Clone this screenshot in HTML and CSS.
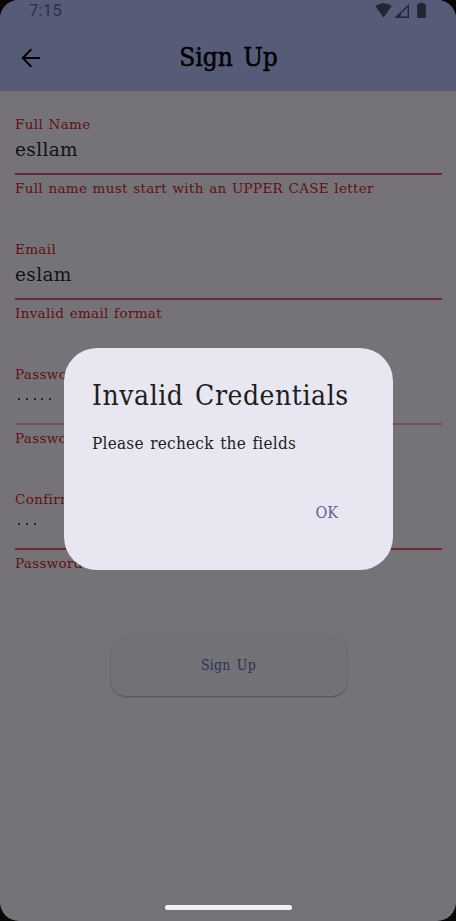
FILE: index.html
```html
<!DOCTYPE html>
<html lang="en">
<head>
<meta charset="utf-8">
<title>Sign Up</title>
<link rel="stylesheet" href="styles.css">
</head>
<body>
<div class="screen">
  <header class="header">
    <div class="status">
      <span class="time">7:15</span>
      <svg class="status-icons" width="54" height="18" viewBox="0 0 54 18">
        <path d="M1.200 5.900Q9.500 .4 17.800 5.900L9.500 17.400Z"/>
        <path d="M35 4v13.900H20.600Zm-1.400 3.300-7.200 7v2.300H33.600Z" fill-rule="evenodd"/>
        <path d="M20.600 17.900l6-5.900v5.900Z"/>
        <path d="M45.500 3.800v-1h4v1h1.300q1 0 1 1v12q0 1.200-1.200 1.200h-6.200q-1.200 0-1.200-1.200v-12q0-1 1-1Z"/>
      </svg>
    </div>
    <div class="bar">
      <svg class="back" width="20" height="20" viewBox="0 0 20 20"><path d="M19 10H2M10.300 1.300 1.700 10l8.600 8.700"/></svg>
      <h1>Sign Up</h1>
    </div>
  </header>
  <main class="form">
    <div class="field">
      <label>Full Name</label>
      <div class="value">esllam</div>
      <p class="error">Full name must start with an UPPER CASE letter</p>
    </div>
    <div class="field">
      <label>Email</label>
      <div class="value">eslam</div>
      <p class="error">Invalid email format</p>
    </div>
    <div class="field faint">
      <label>Password</label>
      <div class="value dots"><i></i><i></i><i></i><i></i><i></i></div>
      <p class="error">Password</p>
    </div>
    <div class="field">
      <label>Confirm</label>
      <div class="value dots"><i></i><i></i><i></i></div>
      <p class="error">Password</p>
    </div>
    <button class="submit">Sign Up</button>
  </main>
  <div class="home"></div>
  <section class="dialog" role="dialog">
    <h2>Invalid Credentials</h2>
    <p>Please recheck the fields</p>
    <div class="actions"><button class="ok">OK</button></div>
  </section>
</div>
</body>
</html>
```
FILE: styles.css
```css
* { box-sizing: border-box; margin: 0; padding: 0; }
body { width: 456px; height: 921px; background: #080808; overflow: hidden; }
.screen {
  position: relative;
  display: flex;
  flex-direction: column;
  height: 921px;
  border-radius: 19px;
  overflow: hidden;
  background: #757378;
  color: #080809;
  font-family: "Roboto Slab", "DejaVu Serif Condensed", "DejaVu Serif", serif;
  font-stretch: condensed;
}
.header { height: 91px; background: #565b77; }
.status {
  display: flex;
  justify-content: space-between;
  height: 22px;
  padding: 0 28px 0 29px;
}
.time { font: 17px/21px Roboto, sans-serif; color: #303242; }
.status-icons { fill: #242533; }
.bar { display: flex; align-items: center; height: 71px; padding: 0 21px; }
.back { fill: none; stroke: #000; stroke-width: 2; }
h1 { flex: 1; text-align: center; padding: 0 19px 2px 0; font-size: 26px; line-height: 32px; font-weight: 400; word-spacing: 3px; color: #000; -webkit-text-stroke: .5px #000; }
.form { flex: 1; display: flex; flex-direction: column; padding: 23px 14px 0 15px; font-family: "Roboto Slab", "DejaVu Serif", serif; font-stretch: normal; }
.field { height: 125px; color: #5f1114; }
label { display: block; font-size: 13.500px; line-height: 20px; letter-spacing: .35px; word-spacing: .8px; }
.value { height: 41px; border-bottom: 2px solid #6b2b30; font-size: 18.500px; line-height: 32px; letter-spacing: .35px; color: #111214; }
.faint .value { border-color: #705358; }
.dots { display: flex; gap: 5.75px; padding: 14px 0 0 3px; }
.dots i { width: 2px; height: 2px; border-radius: 50%; background: #111214; }
.error { margin-top: 3px; font-size: 13.500px; line-height: 20px; letter-spacing: .32px; word-spacing: .8px; white-space: nowrap; }
.submit {
  align-self: center;
  width: 236px;
  height: 59px;
  margin-top: 23px;
  padding-bottom: 4px;
  border: 0;
  border-radius: 15px;
  background: #717176;
  box-shadow: 0 1px 2px #505055;
  font: 14px/20px "Roboto Slab", "DejaVu Serif Condensed", "DejaVu Serif", serif;
  font-stretch: condensed;
  letter-spacing: .2px;
  word-spacing: 2px;
  color: #2f3354;
}
.home { align-self: center; width: 127px; height: 5px; margin-bottom: 11px; border-radius: 3px; background: #f3f2f3; }
.dialog {
  position: absolute;
  left: 64px;
  top: 348px;
  width: 329px;
  height: 222px;
  padding: 29px 28px;
  border-radius: 33px;
  background: #e8e6f0;
  color: #1d1d22;
}
h2 { font-size: 28px; line-height: 38px; font-weight: 400; letter-spacing: .55px; word-spacing: 3px; white-space: nowrap; }
.dialog p { margin-top: 16px; font-size: 17px; line-height: 24px; letter-spacing: .25px; word-spacing: 1.4px; white-space: nowrap; }
.actions { display: flex; justify-content: flex-end; margin-top: 46px; padding-right: 27px; }
.ok { border: 0; background: none; font: 16px/24px "Roboto Slab", "DejaVu Serif Condensed", "DejaVu Serif", serif; font-stretch: condensed; color: #5a649b; }
```
